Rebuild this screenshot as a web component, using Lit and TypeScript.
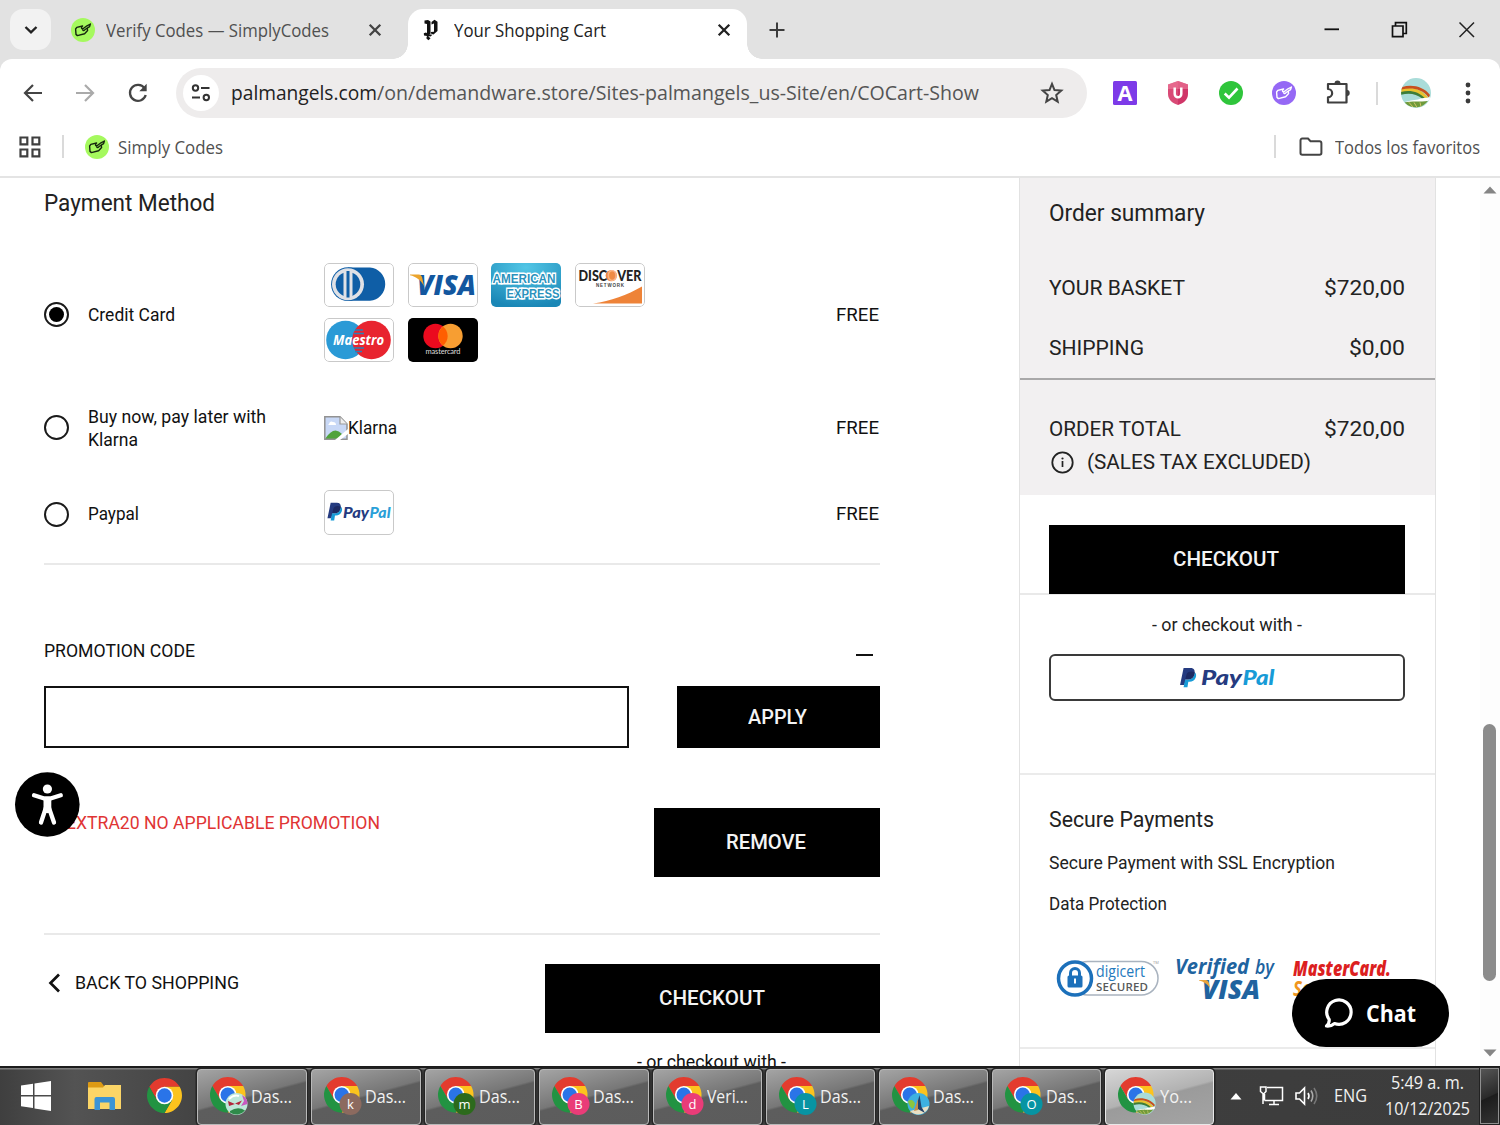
import { LitElement, html, css, svg, TemplateResult } from "lit";
import { customElement, property } from "lit/decorators.js";

/** A single line of text condensed or widened to a fixed measure. */
@customElement("fit-text")
class FitText extends LitElement {
  @property() text = "";
  @property({ type: Number }) w = 0;
  static styles = css`
    :host { display: inline-block; white-space: pre; flex: none; }
    .run { display: inline-block; transform-origin: 0 50%; }
  `;
  updated() {
    const run = this.renderRoot.querySelector(".run") as HTMLElement;
    run.style.transform = "none";
    const natural = run.getBoundingClientRect().width;
    this.style.width = `${this.w}px`;
    if (natural > 0) run.style.transform = `scaleX(${this.w / natural})`;
  }
  render() {
    return html`<span class="run">${this.text}</span>`;
  }
}

const t = (text: string, w: number, cls = "") =>
  html`<fit-text class=${cls} .text=${text} .w=${w}></fit-text>`;

const tagHand = (bg: string, fg: string) => html`
  <svg width="24" height="24" viewBox="0 0 24 24">
    <circle cx="12" cy="12" r="12" fill=${bg} />
    <path d="M4.6 11 L5.8 9.4 L11.6 8 M4.6 11 L5 16.4 L6.4 17.600 L13.600 15.800 L16.600 12.600 L16.300 10.600 M11.600 8 C10 9.600 10.200 11 12 10.800 L16 7.800 L19.400 6 M12 10.800 C11.200 12.800 12.800 13.200 13.800 11.800 L16.600 9.800 L18.600 8.600 L19.400 6"
      fill="none" stroke=${fg} stroke-width="1.4" stroke-linejoin="round" stroke-linecap="round" />
  </svg>`;

const rainbow = svg`
  <circle cx="15" cy="15" r="15" fill="#a9dcd9"/>
  <path d="M.6 10.500 C9 8.600 21 10.500 27.500 20.500 L22.800 20.600 C17 15 8 13 .2 15.500Z" fill="#e8c22f"/>
  <path d="M1.400 9 C11 5.800 23.500 9 29 17 L27.600 19.400 C20 9.600 9 9.600 .5 11.600Z" fill="#c8501f"/>
  <path d="M.1 14 C9 11.600 18 13.800 24.200 20.400 L21.400 20.800 C15 15.600 8 14.800 .2 16.800Z" fill="#3c7d3a"/>
  <path d="M17 21.500 C20 19.600 26 20 29 19.200 L28.600 22 L24 24 L4 24 L10 22.500Z" fill="#fff"/>
  <path d="M3.600 24.600 C10 22.600 20 24 26.800 23 A15 15 0 0 1 3.600 24.600Z" fill="#6f9a3a"/>
  <path d="M8 24.400 L12 29 M13 24.400 L16 29.400 M19 24.400 L20 28.600" stroke="#cfc46a" stroke-width="1"/>`;

const chromeMark = svg`
  <path d="M3.22 12 A24 24 0 0 1 44.78 12 L24 12 L13.6 30Z" fill="#e33b2e"/>
  <path d="M44.78 12 A24 24 0 0 1 24 48 L34.4 30 L24 12Z" fill="#fcc31e"/>
  <path d="M24 48 A24 24 0 0 1 3.22 12 L13.6 30 L34.4 30Z" fill="#229342"/>
  <circle cx="24" cy="24" r="12" fill="#fff"/><circle cx="24" cy="24" r="9.8" fill="#2a74e8"/>`;

const chrome = html`<svg width="35" height="35" viewBox="0 0 48 48">${chromeMark}</svg>`;

const paypalP = svg`
  <path d="M5.2 1 H13 C17.4 1 18.4 4 17.6 7.6 C16.6 12 13.6 13.6 9.8 13.6 H7.6 L6.2 20.4 H1.2Z" fill="#253b80"/>
  <path d="M17.9 6 C20 7.6 19.6 10 19 12 C17.8 15.6 15 16.8 12 16.8 H10.6 L9.6 23 H5.2 L7 14.2 H10.6 C14.6 14 17.4 11.6 17.9 6Z" fill="#179bd7"/>
  <path d="M8.4 9 L7.2 14.2 H10.6 C14.6 14 17.4 11.6 17.9 6 C15 4.4 9.4 4.4 8.4 9Z" fill="#1d2a63"/>`;

const paypalWide = html`
  <svg width="96" height="24" viewBox="0 0 96 24">
    <g transform="translate(0 1) scale(.88)">${paypalP}</g>
    <text x="22" y="19" font-family="Lato, sans-serif" font-weight="900" font-style="italic" font-size="21"
      textLength="41" lengthAdjust="spacingAndGlyphs" fill="#253b80">Pay</text>
    <text x="63.500" y="19" font-family="Lato, sans-serif" font-weight="900" font-style="italic" font-size="21"
      textLength="32" lengthAdjust="spacingAndGlyphs" fill="#179bd7">Pal</text>
  </svg>`;

const paypalSmall = html`
  <svg width="66" height="22" viewBox="0 0 66 22">
    <g transform="translate(.5 1) scale(.8)">${paypalP}</g>
    <text x="17" y="16.500" font-family="Lato, sans-serif" font-weight="900" font-style="italic" font-size="15"
      textLength="26" lengthAdjust="spacingAndGlyphs" fill="#253b80">Pay</text>
    <text x="43.500" y="16.500" font-family="Lato, sans-serif" font-weight="900" font-style="italic" font-size="15"
      textLength="21" lengthAdjust="spacingAndGlyphs" fill="#2a9fd8">Pal</text>
  </svg>`;

const cards: Record<string, TemplateResult> = {
  diners: html`<svg width="70" height="44" viewBox="0 0 70 44">
    <path d="M24 4.500 H46 A16.500 16.700 0 0 1 46 37.800 H24Z" fill="#0f5ea6"/>
    <circle cx="24" cy="21.200" r="16.900" fill="#0f5ea6"/><circle cx="24" cy="21.200" r="16" fill="#dfe1e6"/>
    <circle cx="24" cy="21.200" r="12.300" fill="#0f5ea6"/><rect x="19.500" y="7.500" width="9" height="27.500" fill="#dfe1e6"/>
    <rect x="22.500" y="8" width="3" height="26.500" fill="#0f5ea6"/></svg>`,
  visa: html`<svg width="70" height="44" viewBox="0 0 70 44">
    <text x="9" y="31.500" font-family="Open Sans, sans-serif" font-weight="800" font-style="italic" font-size="28"
      textLength="59" lengthAdjust="spacingAndGlyphs" fill="#13579f">VISA</text>
    <path d="M2 11.500 H10.500 C13 11.500 14 13 14.500 16 L16 23 C13 17 8 13.500 2 12.200Z" fill="#eba42c"/></svg>`,
  amex: html`<svg width="70" height="44" viewBox="0 0 70 44">
    <defs><radialGradient id="ax" cx=".5" cy=".1" r=".9"><stop offset="0" stop-color="#52c6e6"/><stop offset="1" stop-color="#1a87b6"/></radialGradient></defs>
    <rect width="70" height="44" rx="4" fill="url(#ax)"/>
    <text x="1.500" y="20" font-family="Liberation Sans, sans-serif" font-weight="700" font-size="12.500" textLength="63"
      lengthAdjust="spacingAndGlyphs" fill="#2a92bd" stroke="#fff" stroke-width="2.800" paint-order="stroke">AMERICAN</text>
    <text x="15.500" y="34.500" font-family="Liberation Sans, sans-serif" font-weight="700" font-size="12.500" textLength="53"
      lengthAdjust="spacingAndGlyphs" fill="#2a92bd" stroke="#fff" stroke-width="2.800" paint-order="stroke">EXPRESS</text></svg>`,
  discover: html`<svg width="70" height="44" viewBox="0 0 70 44">
    <path d="M18 40.500 C36 38 52 32 67 23.500 V40.500Z" fill="#ee8338"/>
    <circle cx="36.300" cy="12.600" r="5.700" fill="#ef8b45"/>
    <text x="3.500" y="18" font-family="Lato, sans-serif" font-weight="900" font-size="15" textLength="63" lengthAdjust="spacingAndGlyphs" fill="#222">DISC<tspan font-weight="400" fill="#fbb98d">O</tspan>VER</text>
    <text x="21" y="24.300" font-family="Liberation Sans, sans-serif" font-weight="700" font-size="4.500" textLength="28" fill="#444">NETWORK</text></svg>`,
  maestro: html`<svg width="70" height="44" viewBox="0 0 70 44">
    <circle cx="21.500" cy="22" r="19.300" fill="#2a9ad6"/><circle cx="47.500" cy="22" r="19.300" fill="#e8242f"/>
    <path d="M31 12 H39 M30 15.500 H40 M30 30 H40 M31 33.500 H38" stroke="#2a7fb8" stroke-width="1.600"/>
    <text x="9" y="27" font-family="Open Sans, sans-serif" font-weight="700" font-style="italic" font-size="14.500"
      textLength="51" lengthAdjust="spacingAndGlyphs" fill="#fff">Maestro</text></svg>`,
  mastercard: html`<svg width="70" height="44" viewBox="0 0 70 44">
    <rect width="70" height="44" rx="4" fill="#000"/>
    <circle cx="27.500" cy="18" r="12.200" fill="#eb0a1e"/><circle cx="42.500" cy="18" r="12.200" fill="#f79e32"/>
    <path d="M35 8.400 A12.200 12.200 0 0 1 35 27.600 A12.200 12.200 0 0 1 35 8.400Z" fill="#ff5f00"/>
    <text x="17.500" y="36.300" font-family="Lato, sans-serif" font-size="7.500" textLength="35" fill="#ddd">mastercard</text></svg>`,
};

interface Task { label: string; w: number; tw: number; badge?: string; color?: string; art?: string; active?: boolean }
const tasks: Task[] = [
  { label: "Das...", w: 110, tw: 41, art: "flower" },
  { label: "Das...", w: 110, tw: 41, badge: "k", color: "#8c6a5f" },
  { label: "Das...", w: 110, tw: 41, badge: "m", color: "#2c6a1c" },
  { label: "Das...", w: 110, tw: 41, badge: "B", color: "#ea3c78" },
  { label: "Veri...", w: 109, tw: 41, badge: "d", color: "#ea3c78" },
  { label: "Das...", w: 109, tw: 41, badge: "L", color: "#0794a3" },
  { label: "Das...", w: 109, tw: 41, art: "tower" },
  { label: "Das...", w: 109, tw: 41, badge: "O", color: "#0794a3" },
  { label: "Yo...", w: 109, tw: 32, art: "rainbow", active: true },
];

const badgeArt: Record<string, unknown> = {
  flower: svg`<circle cx="26.500" cy="28" r="11" fill="#bfe8da"/><path d="M18 25 L25 28 L19 30 Z M25 27.500 L32 24.500 L29 29Z" fill="#b3263c"/>
    <path d="M32 19 Q37.500 22 37.500 28 L31 30 L34 25Z" fill="#c85ac0"/><path d="M20 35 Q28 30 35 34.500 A11 11 0 0 1 20 36.500Z" fill="#2f8a4a"/><path d="M19 23 Q24 18 29 20" stroke="#fff" stroke-width="2" fill="none"/>`,
  tower: svg`<circle cx="26.500" cy="28" r="11" fill="#3eb1e0"/><path d="M16 25 Q21 22 23 28 L21 33 Q17 31 16 25Z" fill="#8cc63e"/>
    <path d="M18 35 L37 30 A11 11 0 0 1 20 36.500Z" fill="#e9e0c4"/><path d="M27.500 19 L29.500 31 L33 37 L24 32Z" fill="#24426b"/><path d="M26 23 L26 34 L22 35Z" fill="#c78d4a"/>`,
  rainbow: svg`<g transform="translate(15.500 16.500) scale(.74)">${rainbow}</g>`,
};

@customElement("app-root")
class AppRoot extends LitElement {
  static styles = css`
    :host { display: flex; flex-direction: column; width: 1500px; height: 1125px; overflow: hidden; position: relative;
      background: #fff; font-family: Roboto, "Liberation Sans", sans-serif; color: #111; font-size: 18px; line-height: 24px; }
    * { box-sizing: border-box; }
    svg { display: block; flex: none; overflow: visible; }
    .sys { font-family: "Open Sans", "Noto Sans", sans-serif; }
    .grow { flex: 1; }
    .row { display: flex; align-items: center; }

    .tabs { height: 59px; background: #e2e2e2; display: flex; align-items: flex-start; padding: 9px 0 0 10px; font-size: 17.5px; flex: none; }
    .drop { width: 41px; height: 41px; border-radius: 13px; background: #f2f2f2; display: grid; place-items: center; }
    .tab { height: 50px; display: flex; align-items: center; padding-bottom: 8px; color: #505050; flex: none; }
    .idle { width: 357px; padding-left: 20px; }
    .idle .name { margin-left: 11px; } .idle .x { margin-left: 39px; }
    .live { position: relative; width: 339px; background: #fff; border-radius: 15px 15px 0 0; padding-left: 15px; color: #222; }
    .live .name { margin-left: 16px; } .live .x { margin-left: 111px; }
    .live::before, .live::after { content: ""; position: absolute; bottom: 0; width: 15px; height: 15px; }
    .live::before { left: -15px; background: radial-gradient(circle at 0 0, transparent 14.5px, #fff 15px); }
    .live::after { right: -15px; background: radial-gradient(circle at 100% 0, transparent 14.5px, #fff 15px); }
    .plus { margin: 13px 0 0 22px; }
    .win { display: flex; gap: 51px; padding: 12px 25px 0 0; }

    .toolwrap { background: #e2e2e2; flex: none; }
    .tool { height: 62px; border-radius: 12px 12px 0 0; background: #fff; display: flex; padding: 9px 0 0 22px; align-items: flex-start; }
    .nav { display: flex; gap: 30px; height: 50px; align-items: center; width: 154px; }
    .nav svg:last-child { margin-left: 1px; }
    .omni { width: 911px; height: 50px; border-radius: 25px; background: #eeecec; display: flex; align-items: center; padding: 0 23px 0 7px; font-size: 20px; color: #555; }
    .site { width: 36px; height: 36px; border-radius: 50%; background: #fff; display: grid; place-items: center; margin-right: 12px; }
    .host { color: #222; }
    .exts { display: flex; align-items: center; height: 50px; gap: 29px; padding-left: 26px; }
    .who { display: flex; align-items: center; gap: 23px; margin-left: -4px; }
    .dots { margin-left: 5px; }
    .vr { width: 2px; height: 23px; background: #dadada; }
    .marks { flex: none; display: flex; align-items: center; padding: 0 20px 4px 19px; font-size: 17.5px; color: #505050; border-bottom: 2px solid #e4e4e4; height: 57px; }
    .marks .m1 { margin-left: 21px; } .marks .m2 { margin: 0 9px 0 21px; }
    .folder { margin: 0 12px 0 23px; }

    .page { height: 888px; flex: none; display: flex; overflow: hidden; background: #fff; }
    .main { width: 880px; padding: 0 0 0 44px; flex: none; }
    .h { font-size: 24px; height: 51px; line-height: 51px; color: #222; }
    .opt { display: grid; grid-template-columns: 43px 237px 1fr auto; align-items: center; padding-right: 1px; }
    .opt.credit { height: 103px; margin-top: 34px; }
    .opt.credit .lbl { padding-top: 2px; }
    .opt.klarna { height: 50px; margin-top: 37px; }
    .opt.klarna .radio { margin-bottom: 1px; }
    .opt.klarna .lbl { padding-top: 2px; }
    .opt.pp { height: 46px; margin-top: 37px; }
    .radio { width: 25px; height: 25px; border: 2px solid #1a1a1a; border-radius: 50%; display: grid; place-items: center; }
    .dot { width: 15px; height: 15px; border-radius: 50%; background: #000; }
    .lbl { font-size: 17.5px; line-height: 23px; display: flex; flex-direction: column; padding-left: .5px; }
    .deck { display: grid; grid-template-columns: repeat(4, 70px); column-gap: 13.7px; row-gap: 11px; align-self: start; }
    .card { width: 70px; height: 44px; border-radius: 5px; overflow: hidden; position: relative; }
    .card.edge::after { content: ""; position: absolute; inset: 0; border: 1.5px solid #c9c9c9; border-radius: 5px; }
    .free { font-size: 18px; }
    .ppcard { display: grid; place-items: center; border: 1.5px solid #c9c9c9; height: 45px; margin-bottom: 3px; padding-bottom: 2px; }
    .hr { height: 2px; background: #e9e9e9; }
    .h1 { margin-top: 27px; } .h2 { margin-top: 56px; }
    .promohead { display: flex; justify-content: space-between; align-items: center; height: 24px; margin-top: 74px; padding-right: 7px; font-size: 18px; }
    .minus { width: 17px; height: 2px; background: #111; margin-top: 7px; }
    .promo { display: flex; justify-content: space-between; margin-top: 23px; height: 62px; }
    .input { width: 585px; height: 62px; border: 2px solid #111; }
    .btn { background: #000; color: #f4f4f4; display: grid; place-items: center; font-weight: 500; font-size: 20.5px; padding: 0 2px 2px 0; }
    .apply { width: 203px; height: 62px; padding-bottom: 1px; } .remove { width: 226px; height: 69px; }
    .applied { display: flex; justify-content: space-between; margin-top: 60px; height: 69px; }
    .err { color: #e03434; font-size: 18px; padding: 3px 0 0 22px; }
    .foot { display: flex; justify-content: space-between; margin-top: 29px; }
    .back { display: flex; align-items: center; height: 38px; padding-left: 4px; gap: 14px; font-size: 18.5px; }
    .pay { width: 335px; display: flex; flex-direction: column; }
    .pay .btn { height: 69px; } .pay .or { margin-top: 17px; text-align: center; padding-right: 3px; }
    .or { font-size: 17.5px; line-height: 24px; }

    .side { width: 417px; margin-left: 139px; border: 1px solid #e2e2e2; border-top: 0; border-bottom: 0; flex: none; color: #222; }
    .sum { background: #f2f0f1; height: 317px; font-size: 20.5px; }
    .top { height: 202px; border-bottom: 2px solid #a9a8a9; padding: 0 30.5px 0 28.5px; }
    .line { display: flex; justify-content: space-between; height: 30px; line-height: 30px; }
    .top .t { font-size: 24px; line-height: 35px; padding-top: 18px; height: 95px; }
    .top .l2 { margin-top: 30px; }
    .bot { padding: 34px 30.5px 0 28.5px; }
    .tax { display: flex; align-items: center; height: 34px; gap: 13px; padding: 2px 0 0 2px; }
    .cta { height: 100px; padding: 30px 30px 0 29px; border-bottom: 2px solid #e9e9e9; }
    .cta .btn { height: 69px; }
    .alt { height: 180px; border-bottom: 2px solid #ebebeb; padding: 18px 30px 0 29px; text-align: center; }
    .alt .or { padding-right: 2px; }
    .ppbtn { margin-top: 17px; height: 47px; border: 2px solid #3a3a3a; border-radius: 6px; display: grid; place-items: center; }
    .sec { height: 274px; border-bottom: 2px solid #ebebeb; padding: 32px 29px 0; }
    .sec .t { font-size: 22px; line-height: 26px; display: block; }
    .sec .a { margin-top: 18px; height: 24px; font-size: 17.5px; } .sec .b { margin-top: 17px; height: 24px; font-size: 17.5px; }
    .seals { display: flex; gap: 14px; margin-top: 35px; padding-left: 6px; }
    .scroll { margin-left: auto; width: 20px; height: 888px; background: #fdfdfd; display: flex; flex-direction: column; align-items: center; padding: 8px 1px 9px 0; }
    .thumb { width: 13px; height: 257px; border-radius: 7px; background: #8b8b8b; margin: 530px 0 auto; }

    .access { position: absolute; left: 15px; top: 772px; }
    .chat { position: absolute; left: 1292px; top: 979px; width: 157px; height: 68px; border-radius: 34px; background: #000; color: #fff;
      display: flex; align-items: center; padding-left: 32px; gap: 12px; font-weight: 700; font-size: 23px; }

    .bar { height: 59px; flex: none; display: flex; align-items: flex-start; border-top: 2px solid #1c1c1c; color: #f2f2f2; font-size: 18px;
      background: linear-gradient(#7d7d7d 0 1px, transparent 2px), linear-gradient(90deg, #3f3f3f 0, #535353 5%, #424242 14%, #3c3c3c); }
    .pins { display: flex; align-items: center; height: 55px; width: 197px; padding-left: 20px; }
    .pins .e { margin: 0 26px 0 36px; }
    .tasks { display: flex; gap: 4px; width: 1017px; }
    .task { height: 56px; margin-top: 1px; border: 1.5px solid #b9b9b9; border-radius: 4px; display: flex; align-items: center; padding: 0 0 3px 12px; box-shadow: 0 0 0 1.5px #252525;
      background: linear-gradient(165deg, #a4a4a4 0, #777 47%, #5d5d5d 50%, #5c5c5c); overflow: hidden; flex: none; }
    .task.active { border-color: #e8e8e8; background: linear-gradient(165deg, #d6d6d6 0, #b2b2b2 47%, #9b9b9b 50%, #a4a4a4); }
    .task .tx { margin-left: 1px; }
    .task.active .tx { margin-left: 2px; }
    .tray { display: flex; align-items: center; height: 56px; padding-left: 16px; }
    .tray .n { margin-left: 17px; } .tray .v { margin-left: 11px; } .tray .g { margin: 0 0 2px 14px; }
    .clock { margin-left: 18px; display: flex; flex-direction: column; align-items: center; line-height: 26px; padding-bottom: 2px; }
    .desk { margin-left: 10px; width: 19px; height: 56px; border: 1.5px solid #8f8f8f; background: linear-gradient(155deg, #555, #2a2a2a 50%, #1c1c1c 52%, #333); box-shadow: 0 0 0 1px #222; }
  `;

  private cross(color: string) {
    return html`<svg width="14" height="14" viewBox="0 0 14 14"><path d="M1.700 1.700 L12.300 12.300 M12.300 1.700 L1.700 12.300" stroke=${color} stroke-width="2.300"/></svg>`;
  }

  private tabs() {
    return html`<div class="tabs sys">
      <div class="drop"><svg width="14" height="10" viewBox="0 0 14 10"><path d="M1.500 2 L7 7.300 L12.500 2" fill="none" stroke="#222" stroke-width="2.400"/></svg></div>
      <div class="tab idle">${tagHand("#a5f95e", "#16260f")}${t("Verify Codes — SimplyCodes", 223, "name")}
        <span class="x">${this.cross("#444")}</span></div>
      <div class="tab live">
        <svg width="15" height="22" viewBox="0 0 15 22" fill="#111"><path d="M1.500 1.500 L5 1 L7.500 2.500 V14.500 L5.500 16.500 L4 15 V5 L1.500 4.500Z"/><path d="M8.500 3 L11.500 .8 L14.500 2.800 V12 L10.500 15.500 L7.800 14.500 L7.800 13 L11 12.800 V4.500 L8.500 5.500Z"/><path d="M.8 14.300 L3 13.500 L5.500 15.300 L9.500 15.800 L7.500 17.500 L5.200 17 L7.500 19.500 L5.300 21.300 L3.300 19.300 L4 17 L1 16.500Z"/></svg>
        ${t("Your Shopping Cart", 152, "name")}<span class="x">${this.cross("#222")}</span></div>
      <svg class="plus" width="16" height="16" viewBox="0 0 16 16"><path d="M8 .5 V15.500 M.5 8 H15.500" stroke="#3c3c3c" stroke-width="2"/></svg>
      <div class="grow"></div>
      <div class="win">
        <svg width="16" height="17" viewBox="0 0 16 17"><path d="M1.500 8.300 H16" stroke="#111" stroke-width="1.800"/></svg>
        <svg width="17" height="17" viewBox="0 0 17 17"><path d="M2.500 5 H13 V15.700 H2.500Z M5.500 4.700 V1.700 H16.300 V12.500 H13" fill="none" stroke="#111" stroke-width="1.700"/></svg>
        <svg width="17" height="17" viewBox="0 0 17 17"><path d="M1.500 1.500 L16 16 M16 1.500 L1.500 16" stroke="#222" stroke-width="1.500"/></svg>
      </div></div>`;
  }

  private toolbar() {
    return html`<div class="toolwrap"><div class="tool sys">
      <div class="nav">
        <svg width="22" height="20" viewBox="0 0 22 20"><path d="M20 10 H3.500 M11 2 L3 10 L11 18" fill="none" stroke="#444" stroke-width="2.200"/></svg>
        <svg width="22" height="20" viewBox="0 0 22 20"><path d="M2 10 H18.500 M11 2 L19 10 L11 18" fill="none" stroke="#aaa" stroke-width="2.200"/></svg>
        <svg width="22" height="22" viewBox="0 0 22 22"><path d="M18.700 13 A8 8 0 1 1 17.500 6.200" fill="none" stroke="#444" stroke-width="2.300"/><path d="M19.700 1.800 V9.200 H12.300Z" fill="#444"/></svg>
      </div>
      <div class="omni">
        <div class="site"><svg width="20" height="18" viewBox="0 0 20 18" fill="none" stroke="#333" stroke-width="2"><circle cx="4.500" cy="4" r="2.700"/><path d="M10 4 H18.500 M1 13.500 H9"/><circle cx="15.300" cy="13.500" r="2.700"/></svg></div>
        ${t("palmangels.com", 146, "host")}${t("/on/demandware.store/Sites-palmangels_us-Site/en/COCart-Show", 602)}
        <div class="grow"></div>
        <svg width="24" height="24" viewBox="0 0 24 24"><path d="M12 2.800 L14.500 9 L21.300 9.600 L16.200 14 L17.700 20.700 L12 17.200 L6.300 20.700 L7.800 14 L2.700 9.600 L9.500 9Z" fill="none" stroke="#444" stroke-width="2"/></svg>
      </div>
      <div class="exts">
        <svg width="24" height="24" viewBox="0 0 24 24"><rect width="24" height="24" rx="1.500" fill="#7d3ae8"/><text x="4.500" y="19.500" font-family="Open Sans, sans-serif" font-weight="700" font-size="21" textLength="15" lengthAdjust="spacingAndGlyphs" fill="#fff">A</text></svg>
        <svg width="24" height="24" viewBox="0 0 24 24"><path d="M12 0 L22 3.600 V13 C22 19 17 22.500 12 24Z" fill="#d03568"/><path d="M12 0 L2 3.600 V13 C2 19 7 22.500 12 24Z" fill="#d94a76"/><path d="M12 0 L22 3.600 V8 H2 V3.600Z" fill="#ee7d9d" opacity=".6"/><path d="M8.700 6.500 V13 A3.300 3.300 0 0 0 15.300 13 V6.500" fill="none" stroke="#fff" stroke-width="2.500"/></svg>
        <svg width="24" height="24" viewBox="0 0 24 24"><circle cx="12" cy="12" r="12" fill="#2fc53b"/><path d="M5.700 12.500 L10 16.700 L18.500 7.500" fill="none" stroke="#fff" stroke-width="2.600"/></svg>
        ${tagHand("#9568f5", "#fff")}
        <svg width="26" height="26" viewBox="0 0 26 26"><path d="M3 4 H21.500 V22.500 H3 V17.300 A3.800 3.800 0 0 0 3 9 Z" fill="none" stroke="#3f3f3f" stroke-width="2.200" stroke-linejoin="round"/><path d="M9.500 3.500 A3 3 0 0 1 15.500 3.500Z M22 9.800 A3.300 3.300 0 0 1 22 16.300Z" fill="#3f3f3f"/></svg>
        <div class="who"><div class="vr"></div>
        <svg width="30" height="30" viewBox="0 0 30 30">${rainbow}</svg></div>
        <svg class="dots" width="6" height="22" viewBox="0 0 6 22" fill="#3a3a3a"><circle cx="3" cy="3" r="2.400"/><circle cx="3" cy="11" r="2.400"/><circle cx="3" cy="19" r="2.400"/></svg>
      </div></div></div>
      <div class="marks sys">
        <svg width="22" height="22" viewBox="0 0 22 22" fill="none" stroke="#3f3f3f" stroke-width="2.200"><path d="M1.500 1.500 H8.300 V8.300 H1.500Z M13.500 1.500 H20.300 V8.300 H13.500Z M1.500 13.500 H8.300 V20.300 H1.500Z M13.500 13.500 H20.300 V20.300 H13.500Z"/></svg>
        <div class="vr m1"></div><span class="m2">${tagHand("#a5f95e", "#16260f")}</span>${t("Simply Codes", 105)}
        <div class="grow"></div><div class="vr"></div>
        <svg class="folder" width="24" height="20" viewBox="0 0 24 20"><path d="M1.500 3.500 Q1.500 1.600 3.300 1.600 H9 L11.500 4.300 H20.500 Q22.400 4.300 22.400 6.200 V16 Q22.400 17.800 20.500 17.800 H3.300 Q1.500 17.800 1.500 16Z" fill="none" stroke="#444" stroke-width="2"/></svg>
        ${t("Todos los favoritos", 145)}
      </div>`;
  }

  private main() {
    const card = (n: string) => html`<div class="card ${n === "amex" || n === "mastercard" ? "" : "edge"}">${cards[n]}</div>`;
    return html`<div class="main">
      <div class="h">${t("Payment Method", 171)}</div>
      <div class="opt credit"><div class="radio"><div class="dot"></div></div><div class="lbl">${t("Credit Card", 87)}</div>
        <div class="deck">${["diners", "visa", "amex", "discover", "maestro", "mastercard"].map(card)}</div>${t("FREE", 43, "free")}</div>
      <div class="opt klarna"><div class="radio"></div><div class="lbl">${t("Buy now, pay later with", 178)}${t("Klarna", 50)}</div>
        <div class="row"><svg width="24" height="24" viewBox="0 0 24 24"><path d="M1 1 H16 L23 8 V23 H1Z" fill="#c8d8f6"/><path d="M5 8 Q6 4.500 9 6 Q12 6 12 9 H4Z" fill="#fff"/><path d="M1 23 Q10 9 18 18 L14 23Z" fill="#51a33c"/><path d="M.8 .8 H16 L23 8 V23.200 H.8Z" fill="none" stroke="#929292" stroke-width="1.500"/><path d="M16 1 V8 H23" fill="#eee" stroke="#999" stroke-width="1.200"/><path d="M24 13 L11 24 H16 L24 18Z" fill="#fff"/></svg>${t("Klarna", 49)}</div>${t("FREE", 43, "free")}</div>
      <div class="opt pp"><div class="radio"></div><div class="lbl">${t("Paypal", 51)}</div>
        <div class="card ppcard">${paypalSmall}</div>${t("FREE", 43, "free")}</div>
      <div class="hr h1"></div>
      <div class="promohead">${t("PROMOTION CODE", 151)}<div class="minus"></div></div>
      <div class="promo"><div class="input"></div><div class="btn apply">${t("APPLY", 59)}</div></div>
      <div class="applied"><div class="err">${t("EXTRA20 NO APPLICABLE PROMOTION", 314)}</div><div class="btn remove">${t("REMOVE", 80)}</div></div>
      <div class="hr h2"></div>
      <div class="foot"><div class="back"><svg width="13" height="20" viewBox="0 0 13 20"><path d="M11 1.500 L2.500 10 L11 18.500" fill="none" stroke="#111" stroke-width="2.700"/></svg>${t("BACK TO SHOPPING", 164)}</div>
        <div class="pay"><div class="btn">${t("CHECKOUT", 106)}</div><div class="or">${t("- or checkout with -", 149)}</div></div></div>
    </div>`;
  }

  private side() {
    return html`<div class="side">
      <div class="sum"><div class="top"><div class="t">${t("Order summary", 156)}</div>
        <div class="line">${t("YOUR BASKET", 136)}${t("$720,00", 81)}</div>
        <div class="line l2">${t("SHIPPING", 95)}${t("$0,00", 56)}</div></div>
        <div class="bot"><div class="line">${t("ORDER TOTAL", 132)}${t("$720,00", 81)}</div>
        <div class="tax"><svg width="23" height="23" viewBox="0 0 23 23"><circle cx="11.500" cy="11.500" r="10.200" fill="none" stroke="#222" stroke-width="1.800"/><path d="M11.500 10 V16" stroke="#222" stroke-width="1.700"/><circle cx="11.500" cy="7.500" r="1.100" fill="#222"/></svg>${t("(SALES TAX EXCLUDED)", 224)}</div></div></div>
      <div class="cta"><div class="btn">${t("CHECKOUT", 106)}</div></div>
      <div class="alt"><div class="or">${t("- or checkout with -", 150)}</div><div class="ppbtn">${paypalWide}</div></div>
      <div class="sec">${t("Secure Payments", 165, "t")}<div class="a">${t("Secure Payment with SSL Encryption", 286)}</div><div class="b">${t("Data Protection", 118)}</div>
        <div class="seals">
          <svg width="105" height="50" viewBox="0 0 105 50"><rect x="16" y="10.500" width="87" height="33.500" rx="16.700" fill="#fff" stroke="#a9b3bf" stroke-width="1.500"/><circle cx="20" cy="27.500" r="16.500" fill="#fff" stroke="#1c70ba" stroke-width="3.500"/>
            <rect x="12.500" y="24.500" width="15" height="12" rx="1.500" fill="#1c70ba"/><path d="M15.500 25.500 V22 A4.500 4.500 0 0 1 24.500 22 V25.500" fill="none" stroke="#1c70ba" stroke-width="3"/><path d="M20 27.500 V32.500" stroke="#fff" stroke-width="2"/>
            <text x="41" y="26" font-family="Open Sans, sans-serif" font-size="16.500" textLength="49" lengthAdjust="spacingAndGlyphs" fill="#2479bd">digicert</text>
            <text x="41" y="39.500" font-family="Open Sans, sans-serif" font-weight="600" font-size="11.500" textLength="52" fill="#58595b">SECURED</text>
            <text x="98" y="12.500" font-family="Open Sans, sans-serif" font-size="4" fill="#999">TM</text></svg>
          <svg width="104" height="50" viewBox="0 0 104 50"><text x="1" y="23" font-family="Open Sans, sans-serif" font-weight="700" font-style="italic" font-size="21.500" textLength="74" lengthAdjust="spacingAndGlyphs" fill="#20639f">Verified</text>
            <text x="81" y="23" font-family="Open Sans, sans-serif" font-weight="600" font-style="italic" font-size="19" textLength="19" lengthAdjust="spacingAndGlyphs" fill="#20639f">by</text>
            <text x="28" y="48" font-family="Open Sans, sans-serif" font-weight="800" font-style="italic" font-size="27" textLength="58" lengthAdjust="spacingAndGlyphs" fill="#20639f">VISA</text>
            <path d="M25 29 H32 Q34 29 35 32 L36 37 Q32 31 25 29.500Z" fill="#e9a33a"/></svg>
          <svg width="104" height="50" viewBox="0 0 104 50"><text x="1" y="24.500" font-family="Open Sans, sans-serif" font-weight="800" font-style="italic" font-size="21" textLength="98" lengthAdjust="spacingAndGlyphs" fill="#dc1f1f">MasterCard.</text>
            <text x="1" y="45" font-family="Open Sans, sans-serif" font-weight="700" font-style="italic" font-size="21" textLength="98" lengthAdjust="spacingAndGlyphs" fill="#f0961e">SecureCode.</text></svg>
        </div></div>
    </div>`;
  }

  private taskbar() {
    return html`<div class="bar sys">
      <div class="pins">
        <svg width="32" height="32" viewBox="0 0 32 32" fill="#fff"><path d="M1 5.500 L13 3.800 V15 H1Z M14.500 3.500 L31 1 V15 H14.500Z M1 16.500 H13 V28 L1 26.300Z M14.500 16.500 H31 V31 L14.500 28.400Z"/></svg>
        <svg class="e" width="33" height="30" viewBox="0 0 33 30"><path d="M0 2 Q0 1 1 1 H13 L16 5 V9 H0Z" fill="#dd9a14"/><path d="M0 6.500 H15 L17 4 H33 V28 H0Z" fill="#fbd567"/><path d="M6.500 29 V18 Q6.500 16 8.500 16 H25 Q27 16 27 18 V29 H21.500 V21.500 H12 V29Z" fill="#3b94d6"/></svg>
        ${chrome}
      </div>
      <div class="tasks">${tasks.map((k) => html`<div class="task ${k.active ? "active" : ""}" style="width:${k.w}px">
        <svg width="40" height="40" viewBox="0 0 40 40"><g transform="translate(0 1) scale(.74)">${chromeMark}</g>
          ${k.art ? badgeArt[k.art] : svg`<circle cx="26.500" cy="28" r="11" fill=${k.color}/><text x="26.500" y="32.500" text-anchor="middle" font-size="13" font-family="Open Sans, sans-serif" fill="#fff">${k.badge}</text>`}
        </svg>${t(k.label, k.tw, "tx")}</div>`)}</div>
      <div class="tray">
        <svg width="12" height="7" viewBox="0 0 12 7"><path d="M6 0 L11.500 6.500 H.5Z" fill="#fff"/></svg>
        <svg class="n" width="25" height="22" viewBox="0 0 25 22" fill="none" stroke="#fff" stroke-width="1.500"><path d="M8 2.500 H23.500 V15.500 H5.500 M5.500 15.500 V9 M15 15.500 V19 M10 19.500 H20 M1.500 2 H7 V6.500 L4.500 9 L1.500 6.500Z M4 9 V19"/></svg>
        <svg class="v" width="25" height="22" viewBox="0 0 25 22" fill="none" stroke="#fff" stroke-width="1.600"><path d="M1 8 H4.500 L9.500 3 V19 L4.500 14 H1Z M13 8 Q15 11 13 14"/><path d="M16 5.500 Q19.500 11 16 16.500" stroke="#aaa"/><path d="M19 3 Q24.500 11 19 19" stroke="#777"/></svg>
        ${t("ENG", 33, "g")}
        <div class="clock">${t("5:49 a. m.", 73)}${t("10/12/2025", 85)}</div>
        <div class="desk"></div>
      </div></div>`;
  }

  render() {
    return html`${this.tabs()}${this.toolbar()}
      <div class="page">${this.main()}${this.side()}
        <div class="scroll"><svg width="14" height="8" viewBox="0 0 14 8"><path d="M7 .5 L13.500 7.500 H.5Z" fill="#858585"/></svg><div class="thumb"></div><svg width="14" height="8" viewBox="0 0 14 8"><path d="M7 7.500 L13.500 .5 H.5Z" fill="#858585"/></svg></div>
      </div>
      ${this.taskbar()}
      <svg class="access" width="65" height="65" viewBox="0 0 65 65"><circle cx="32.300" cy="32.500" r="32.300" fill="#000"/><circle cx="32.400" cy="17" r="4.600" fill="#fff"/><path d="M19 23.300 L28.500 26.300 H36.300 L45.800 23.300 M32.400 27 V39 M30.800 36 L26 50.500 M34 36 L39 50.500" fill="none" stroke="#fff" stroke-width="4.300" stroke-linecap="round" stroke-linejoin="round"/><path d="M28.500 26 H36.300 V38 H28.500Z" fill="#fff"/></svg>
      <div class="chat sys"><svg width="30" height="32" viewBox="0 0 30 32"><path d="M5.200 22.500 A12.200 12.200 0 1 1 10.500 26.500 Q7 29.500 2.500 29 Q5.500 26.500 5.200 22.500Z" fill="none" stroke="#fff" stroke-width="3.200" stroke-linejoin="round"/></svg>${t("Chat", 50)}</div>`;
  }
}
